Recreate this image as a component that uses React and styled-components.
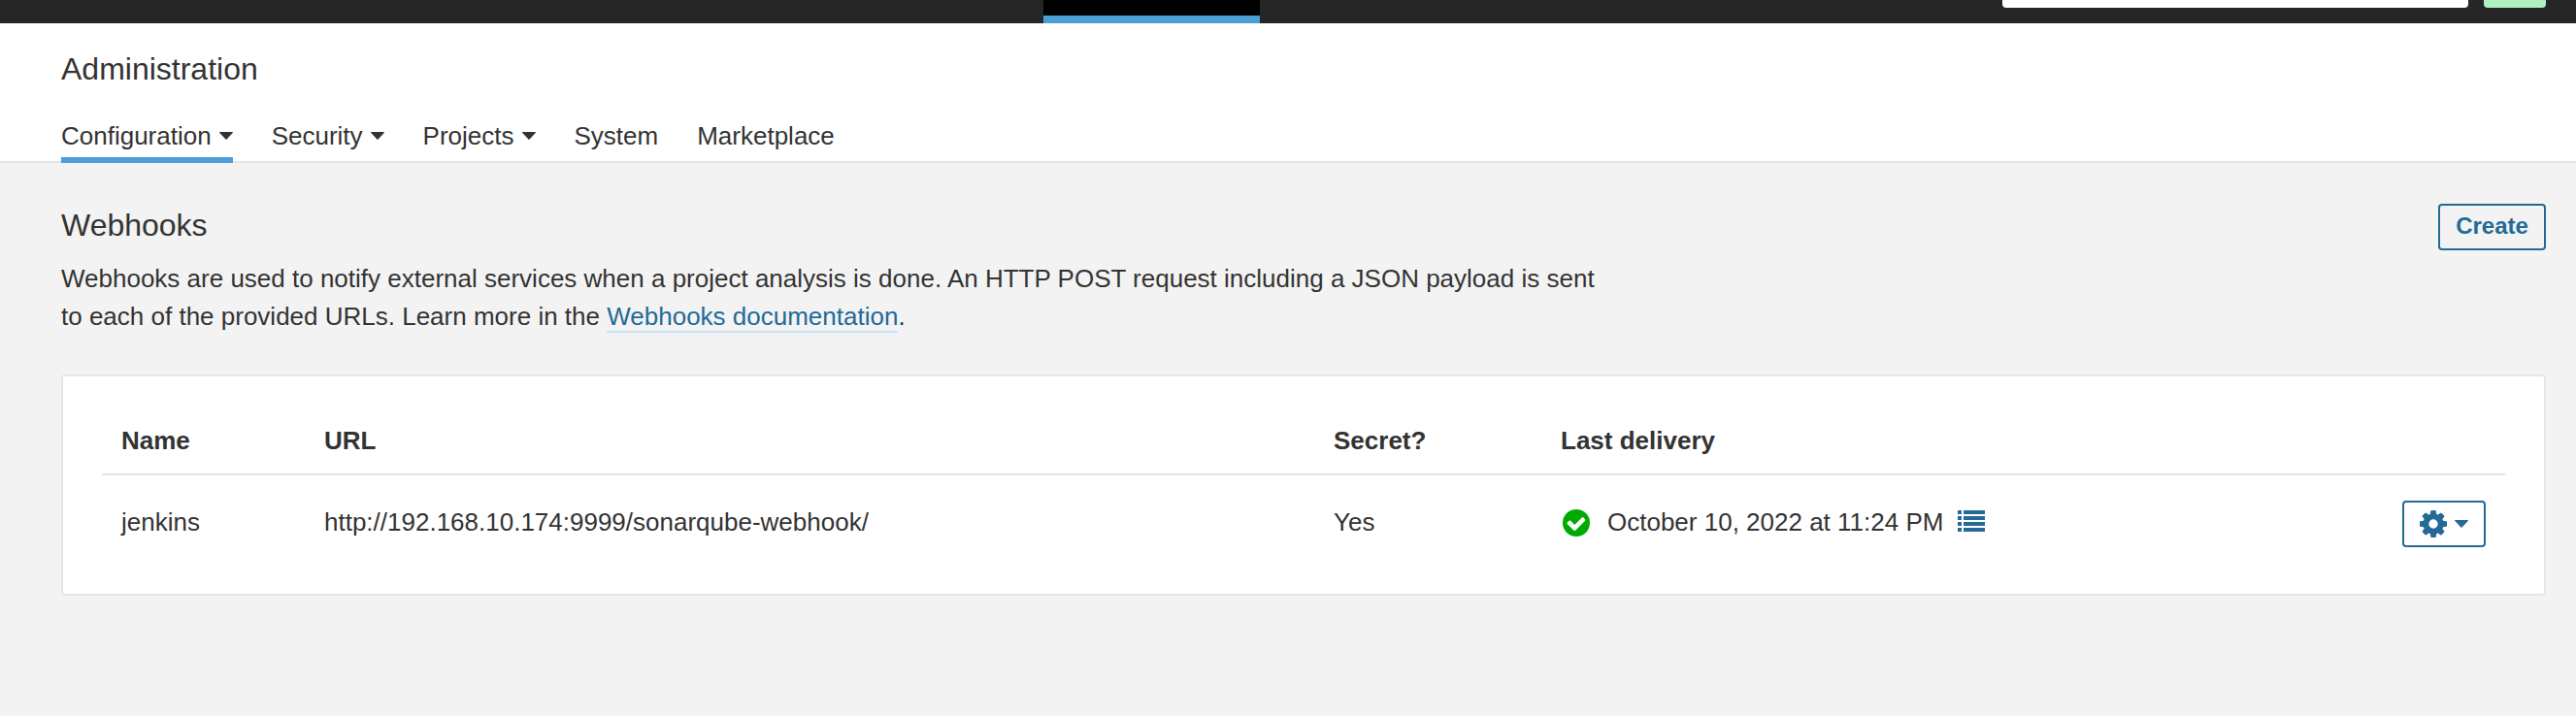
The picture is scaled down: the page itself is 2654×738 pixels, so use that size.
import React from "react";
import styled, { createGlobalStyle } from "styled-components";

const GlobalStyle = createGlobalStyle`
  * { box-sizing: border-box; }
  body {
    margin: 0;
    min-height: 738px;
    background: #f3f3f3;
    color: #333;
    font: 26px/40px "Liberation Sans", Arial, sans-serif;
    overflow: hidden;
  }
  h1, p { margin: 0; }
  svg { display: block; flex: none; }
`;

const TopBar = styled.header`
  height: 24px;
  padding-right: 31px;
  display: flex;
  align-items: flex-start;
  background: #262626;
`;
const ActiveMenu = styled.div`
  width: 223px;
  height: 24px;
  margin-left: 1075px;
  background: #000;
  border-bottom: 8px solid #4b9fd5;
`;
const SearchField = styled.div`
  width: 480px;
  height: 8px;
  margin-left: auto;
  background: #fff;
  border-radius: 0 0 4px 4px;
`;
const Avatar = styled.div`
  width: 64px;
  height: 8px;
  margin-left: 16px;
  background: #adf1c0;
  border-radius: 0 0 4px 4px;
`;

const ContextNav = styled.nav`
  height: 144px;
  padding: 27px 63px 0;
  background: #fff;
  border-bottom: 2px solid #e6e6e6;
`;
const Title = styled.h1`
  font-size: 32px;
  line-height: 40px;
  font-weight: 400;
`;
const Tabs = styled.div`
  display: flex;
  gap: 40px;
  margin-top: 25px;
`;
const Tab = styled.a`
  display: flex;
  align-items: center;
  gap: 8px;
  height: 52px;
  padding-top: 2px;
  border-bottom: 6px solid ${(p) => (p.$active ? "#4b9fd5" : "transparent")};
`;

const Page = styled.main`
  padding: 42px 31px 0 63px;
`;
const PageHeader = styled.div`
  display: flex;
  justify-content: space-between;
  align-items: flex-start;
`;
const Intro = styled.div`
  width: 1600px;
  padding-top: 2px;
`;
const Description = styled.p`
  margin-top: 16px;
  line-height: 39px;
`;
const DocLink = styled.a`
  color: #236a97;
  border-bottom: 2px solid #c6e4f3;
`;
const Button = styled.button`
  display: flex;
  align-items: center;
  justify-content: center;
  gap: 8px;
  width: ${(p) => p.$width}px;
  height: 48px;
  padding: 0 0 3px;
  color: #236a97;
  background: transparent;
  border: 2px solid #236a97;
  border-radius: 4px;
  font: bold 24px/28px "Liberation Sans", Arial, sans-serif;
`;
const MenuButton = styled(Button)`
  padding: 0;
  margin: 2px 0 0 auto;
`;

const Panel = styled.section`
  height: 228px;
  margin-top: 40px;
  padding: 40px;
  background: #fff;
  border: 2px solid #e6e6e6;
  border-radius: 4px;
`;
const Row = styled.div`
  display: grid;
  grid-template-columns: 209px 1040px 234px 1fr 125px;
  align-items: center;
  height: 98px;
  padding: 0 20px;
`;
const HeadRow = styled(Row)`
  height: 62px;
  padding-bottom: 8px;
  font-weight: 700;
  border-bottom: 2px solid #e6e6e6;
`;
const Cell = styled.div`
  padding-bottom: 2px;
`;
const Delivery = styled.div`
  display: flex;
  align-items: center;
`;
const DeliveryDate = styled(Cell)`
  width: 347px;
  margin: 0 14px 0 16px;
  white-space: nowrap;
`;

const Caret = () => (
  <svg width="14" height="8" viewBox="0 0 14 8" fill="currentColor">
    <path d="M.6 0h12.8q.9.2.3 1L7.6 7.6q-.6.6-1.2 0L.3 1Q-.3.2.6 0z" />
  </svg>
);
const Success = () => (
  <svg width="32" height="32" viewBox="0 0 16 16">
    <circle cx="8" cy="8" r="7" fill="#0a0" />
    <path
      fill="#fff"
      d="M12.7 6.52a.57.57 0 0 0-.17-.42l-.83-.82a.56.56 0 0 0-.82 0L7.16 8.99 5.1 6.93a.56.56 0 0 0-.82 0l-.83.82a.57.57 0 0 0 0 .83l3.3 3.3c.11.12.25.17.41.17s.3-.05.42-.17l4.95-4.95a.56.56 0 0 0 .17-.41z"
    />
  </svg>
);
const List = () => (
  <svg width="28" height="26" viewBox="0 0 28 26" fill="#236a97">
    <path d="M0 0h4v4H0zM6 0h22v4H6zM0 6h4v4H0zM6 6h22v4H6zM0 12h4v4H0zM6 12h22v4H6zM0 18h4v4H0zM6 18h22v4H6z" />
  </svg>
);
const Cog = () => (
  <svg width="28" height="28" viewBox="0 128 1536 1536" fill="currentColor">
    <path d="M1024 896q0-106-75-181t-181-75-181 75-75 181 75 181 181 75 181-75 75-181zm512-109v222q0 12-8 23t-20 13l-185 28q-19 54-39 91 35 50 107 138 10 12 10 25t-9 23q-27 37-99 108t-94 71q-12 0-26-9l-138-108q-44 23-91 38-16 136-29 186-7 28-36 28h-222q-14 0-24.5-8.5t-11.5-21.5l-28-184q-49-16-90-37l-141 107q-10 9-25 9-14 0-25-11-126-114-165-168-7-10-7-23 0-12 8-23 15-21 51-66.5t54-70.5q-27-50-41-99l-183-27q-13-2-21-12.5t-8-23.5v-222q0-12 8-23t19-13l186-28q14-46 39-92-40-57-107-138-10-12-10-24 0-10 9-23 26-36 98.5-107.5t94.5-71.5q13 0 26 10l138 107q44-23 91-38 16-136 29-186 7-28 36-28h222q14 0 24.5 8.5t11.5 21.5l28 184q49 16 90 37l142-107q9-9 24-9 13 0 25 10 129 119 165 170 7 8 7 22 0 12-8 23-15 21-51 66.5t-54 70.5q26 50 41 98l183 28q13 2 21 12.5t8 23.5z" />
  </svg>
);

const tabs = [
  { label: "Configuration", menu: true, active: true },
  { label: "Security", menu: true },
  { label: "Projects", menu: true },
  { label: "System" },
  { label: "Marketplace" },
];

export default function App() {
  return (
    <>
      <GlobalStyle />
      <TopBar>
        <ActiveMenu />
        <SearchField />
        <Avatar />
      </TopBar>
      <ContextNav>
        <Title>Administration</Title>
        <Tabs>
          {tabs.map((t) => (
            <Tab key={t.label} $active={t.active}>
              {t.label}
              {t.menu && <Caret />}
            </Tab>
          ))}
        </Tabs>
      </ContextNav>
      <Page>
        <PageHeader>
          <Intro>
            <Title>Webhooks</Title>
            <Description>
              Webhooks are used to notify external services when a project analysis is done. An HTTP
              POST request including a JSON payload is sent to each of the provided URLs. Learn more
              in the <DocLink>Webhooks documentation</DocLink>.
            </Description>
          </Intro>
          <Button $width={111}>Create</Button>
        </PageHeader>
        <Panel>
          <HeadRow>
            <span>Name</span>
            <span>URL</span>
            <span>Secret?</span>
            <span>Last delivery</span>
          </HeadRow>
          <Row>
            <Cell>jenkins</Cell>
            <Cell>http://192.168.10.174:9999/sonarqube-webhook/</Cell>
            <Cell>Yes</Cell>
            <Delivery>
              <Success />
              <DeliveryDate>October 10, 2022 at 11:24 PM</DeliveryDate>
              <List />
            </Delivery>
            <MenuButton $width={86}>
              <Cog />
              <Caret />
            </MenuButton>
          </Row>
        </Panel>
      </Page>
    </>
  );
}
